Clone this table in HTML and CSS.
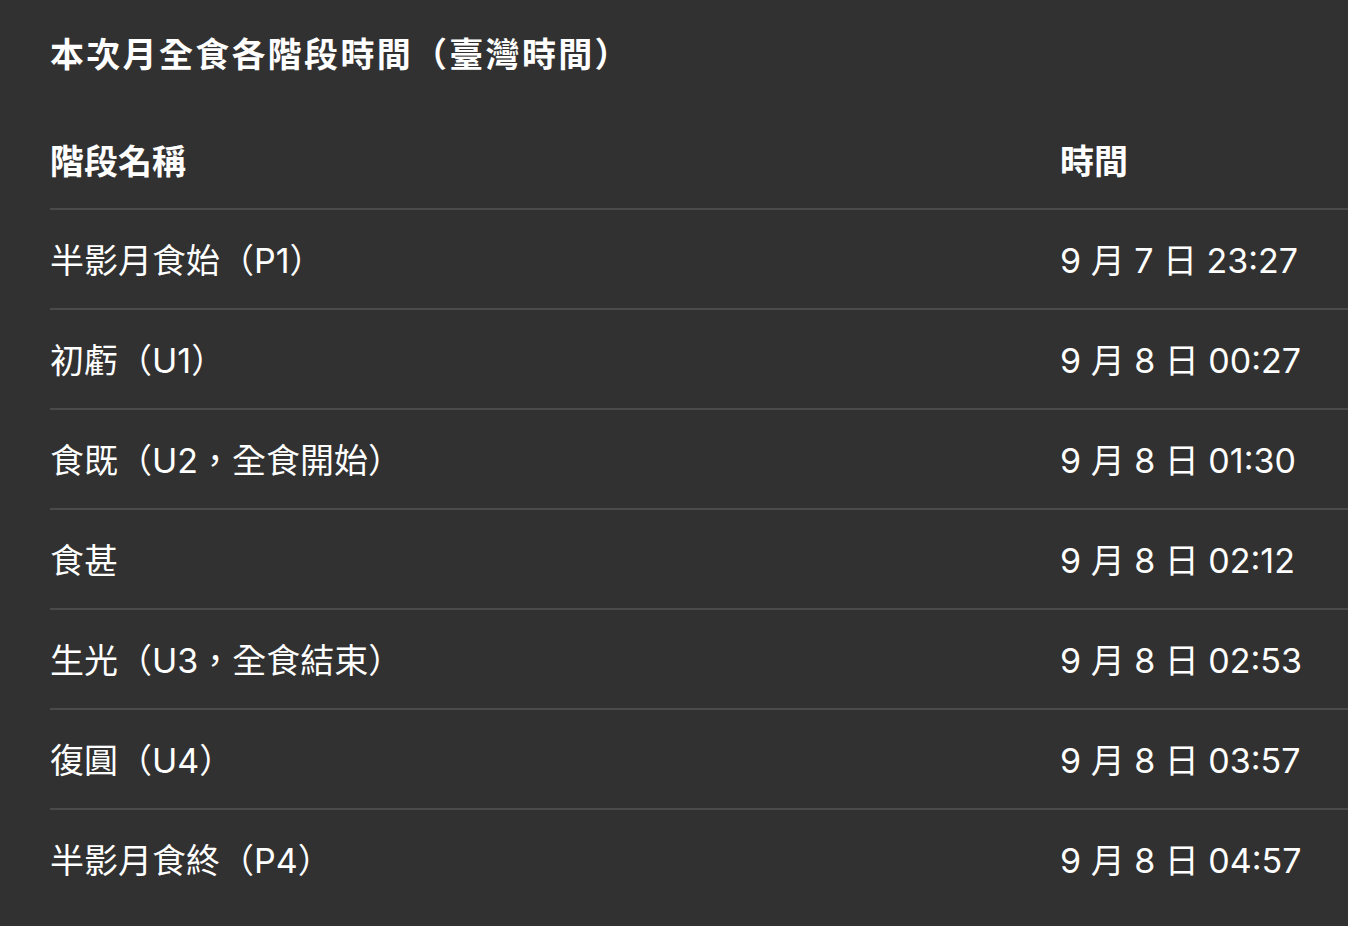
FILE: index.html
```html
<!DOCTYPE html>
<html lang="zh-Hant">
<head>
<meta charset="utf-8">
<title>本次月全食各階段時間</title>
<link rel="stylesheet" href="styles.css">
</head>
<body>
<main class="page">
  <h1 class="title">本次月全食各階段時間（臺灣時間）</h1>
  <table class="phases">
    <thead>
      <tr><th class="col-name">階段名稱</th><th class="col-time">時間</th></tr>
    </thead>
    <tbody>
      <tr><td>半影月食始（P1）</td><td>9 月 7 日 23:27</td></tr>
      <tr><td>初虧（U1）</td><td>9 月 8 日 00:27</td></tr>
      <tr><td>食既（U2，全食開始）</td><td>9 月 8 日 01:30</td></tr>
      <tr><td>食甚</td><td>9 月 8 日 02:12</td></tr>
      <tr><td>生光（U3，全食結束）</td><td>9 月 8 日 02:53</td></tr>
      <tr><td>復圓（U4）</td><td>9 月 8 日 03:57</td></tr>
      <tr><td>半影月食終（P4）</td><td>9 月 8 日 04:57</td></tr>
    </tbody>
  </table>
</main>
</body>
</html>
```
FILE: styles.css
```css
html, body {
  margin: 0;
  padding: 0;
  background: #313131;
}
body {
  color: #ffffff;
  font-family: "Inter", "Noto Sans CJK TC", sans-serif;
  overflow: hidden;
}
.page {
  padding-left: 50px;
}
.title {
  margin: 0;
  padding-top: 30px;
  font-size: 34px;
  line-height: 50px;
  font-weight: 700;
  letter-spacing: 2.3px;
  white-space: nowrap;
}
.phases {
  border-collapse: collapse;
  width: 1298px;
  table-layout: fixed;
}
.col-name {
  width: 1010px;
}
.phases th,
.phases td {
  text-align: left;
  padding: 0;
  font-size: 34px;
  line-height: 48px;
  border-bottom: 2px solid #4a4a4a;
  white-space: nowrap;
}
.phases th {
  font-weight: 700;
  height: 106px;
  vertical-align: bottom;
  padding-bottom: 22px;
}
.phases td {
  font-weight: 400;
  height: 94px;
  padding-top: 4px;
  vertical-align: middle;
}
.phases tbody tr:last-child td {
  border-bottom: none;
}
```
